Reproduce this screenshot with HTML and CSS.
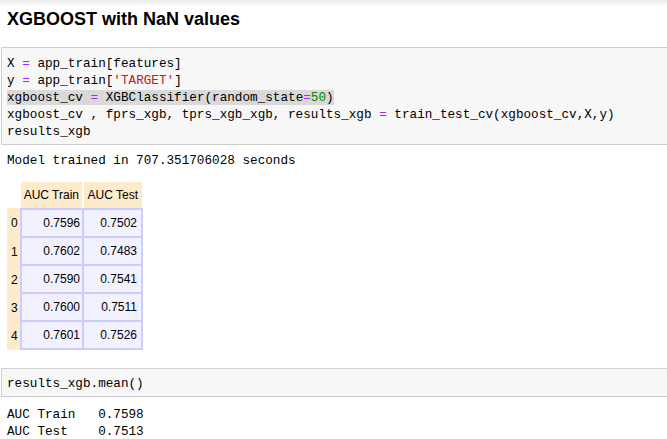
FILE: index.html
```html
<!DOCTYPE html>
<html>
<head>
<meta charset="utf-8">
<link rel="stylesheet" href="styles.css">
</head>
<body>
<div class="page">
  <h2 class="title">XGBOOST with NaN values</h2>

  <div class="cell">
    <pre class="code">X <span class="op">=</span> app_train[features]
y <span class="op">=</span> app_train[<span class="str">'TARGET'</span>]
<span class="sel">xgboost_cv <span class="op">=</span> XGBClassifier(random_state<span class="op">=</span><span class="num">50</span>)</span>
xgboost_cv , fprs_xgb, tprs_xgb_xgb, results_xgb <span class="op">=</span> train_test_cv(xgboost_cv,X,y)
results_xgb</pre>
  </div>

  <pre class="out out-first">Model trained in 707.351706028 seconds</pre>

  <table class="df">
    <thead>
      <tr><th class="blank"></th><th class="h1">AUC Train</th><th class="h2">AUC Test</th></tr>
    </thead>
    <tbody>
      <tr class="first"><th class="idx">0</th><td class="c1">0.7596</td><td class="c2">0.7502</td></tr>
      <tr><th class="idx">1</th><td class="c1">0.7602</td><td class="c2">0.7483</td></tr>
      <tr><th class="idx">2</th><td class="c1">0.7590</td><td class="c2">0.7541</td></tr>
      <tr><th class="idx">3</th><td class="c1">0.7600</td><td class="c2">0.7511</td></tr>
      <tr><th class="idx">4</th><td class="c1">0.7601</td><td class="c2">0.7526</td></tr>
    </tbody>
  </table>

  <div class="cell cell-second">
    <pre class="code">results_xgb.mean()</pre>
  </div>

  <pre class="out out-mean">AUC Train   0.7598
AUC Test    0.7513</pre>
</div>
</body>
</html>
```

FILE: styles.css
```css
html, body {
  margin: 0;
  padding: 0;
}
body {
  background: linear-gradient(#ececec, #ffffff 6px) no-repeat;
  background-color: #ffffff;
  width: 667px;
  height: 439px;
  overflow: hidden;
}
.page {
  padding: 8px 0 0 1px;
}
.title {
  margin: 0 0 0 6px;
  font-family: "Liberation Sans", Arial, sans-serif;
  font-weight: bold;
  font-size: 18px;
  line-height: 22px;
  color: #000;
}
.cell {
  margin-top: 17px;
  background: #f7f7f7;
  border: 1px solid #cfcfcf;
  border-right: 0;
  padding: 7px 0 4px 5px;
}
.code, .out {
  margin: 0;
  font-family: "Liberation Mono", "DejaVu Sans Mono", monospace;
  font-size: 12.67px;
  line-height: 17px;
  color: #000;
}
.op { color: #aa22ff; }
.str { color: #ba2121; }
.num { color: #008800; }
.sel { background: #d9d9d9; }
.out {
  padding-left: 6px;
}
.out-first {
  margin-top: 7px;
}
.df {
  margin: 13px 0 0 6px;
  border-collapse: separate;
  border-spacing: 0;
  font-family: "Liberation Sans", Arial, sans-serif;
  font-size: 12px;
  color: #000;
}
.df th, .df td {
  box-sizing: border-box;
  padding: 0;
  font-weight: normal;
}
.df thead th {
  height: 26px;
  background: #fdebcb;
  text-align: right;
  padding-right: 3px;
}
.df thead th.blank {
  background: transparent;
  width: 13px;
}
.df thead th.h1 {
  width: 64px;
  border-left: 1px solid #fff;
  border-right: 2px solid #fff;
}
.df thead th.h2 {
  width: 59px;
  border-right: 1px solid #fff;
  padding-right: 4px;
}
.df .idx {
  width: 13px;
  background: #fdebcb;
  text-align: left;
  padding-left: 4px;
}
.df td {
  height: 28px;
  background: #f1f1ff;
  border-right: 2px solid #ccccff;
  border-bottom: 2px solid #ccccff;
  text-align: right;
}
.df tr.first td {
  height: 30px;
  border-top: 2px solid #ccccff;
}
.df td.c1 {
  width: 64px;
  border-left: 2px solid #ccccff;
  padding-right: 2px;
}
.df td.c2 {
  width: 59px;
  padding-right: 4px;
}
.cell-second {
  margin-top: 18px;
  padding-top: 6px;
}
.out-mean {
  margin-top: 9px;
}
```
